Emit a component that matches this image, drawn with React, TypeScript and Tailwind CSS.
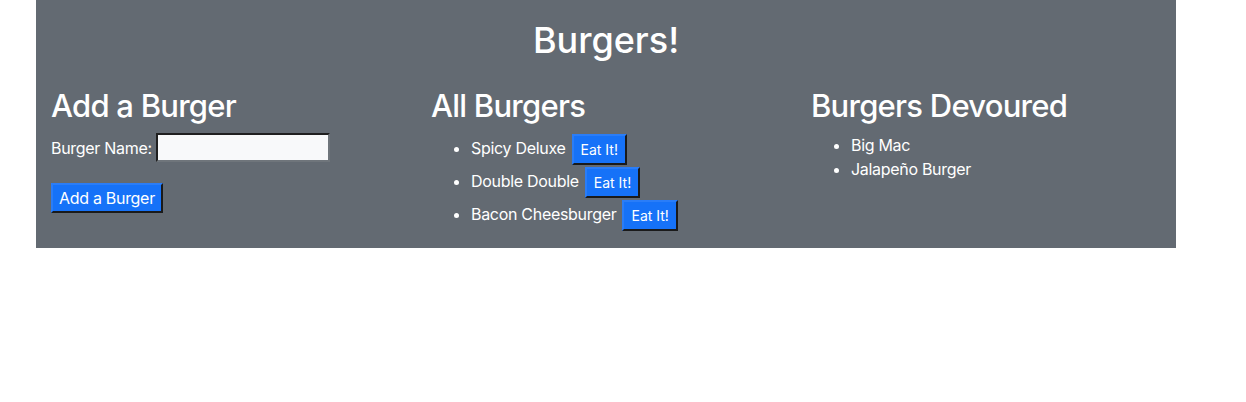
const items = ["Spicy Deluxe", "Double Double", "Bacon Cheesburger"];
const devoured = ["Big Mac", "Jalapeño Burger"];

export default function App() {
  return (
    <div className="min-h-screen bg-white font-['Inter',_'Liberation_Sans',_sans-serif]">
      <div className="ml-[36px] w-[1140px] bg-[#636a72] px-[15px] pt-[16px] text-white">
        <h1 className="text-center text-[36px] font-medium leading-[48px]">Burgers!</h1>

        <div className="mx-[-15px] mt-[23px] grid grid-cols-3 text-base leading-6 tracking-[-0.3px]">
          {/* add form */}
          <div className="px-[15px]">
            <h2 className="mb-2 text-[31px] font-medium leading-[38.4px] tracking-[-0.75px]">Add a Burger</h2>
            <div className="flex items-center gap-[4px]">
              <label>Burger Name:</label>
              <input
                type="text"
                className="h-[29px] w-[174px] border-2 border-t-[#1f1f1f] border-l-[#1f1f1f] border-r-[#6f757b] border-b-[#6f757b] bg-[#f8f9fa] px-[2px] text-black outline-none"
              />
            </div>
            <button className="mt-[21px] h-[30px] border-2 border-t-[#2a7df8] border-l-[#2a7df8] border-r-[#1a1a1a] border-b-[#1a1a1a] bg-[#1672f8] px-[6px] text-white">
              Add a Burger
            </button>
          </div>

          {/* all burgers */}
          <div className="px-[15px]">
            <h2 className="mb-2 text-[31px] font-medium leading-[38.4px] tracking-[-0.75px]">All Burgers</h2>
            <ul className="mb-4 list-disc pl-10">
              {items.map((name) => (
                <li key={name} className="py-[1px]">
                  {name}
                  <button className="ml-[6px] inline-block h-[31px] border-2 border-t-[#2a7df8] border-l-[#2a7df8] border-r-[#1a1a1a] border-b-[#1a1a1a] bg-[#1672f8] px-[7px] align-middle text-sm tracking-normal text-white">
                    Eat It!
                  </button>
                </li>
              ))}
            </ul>
          </div>

          {/* devoured */}
          <div className="px-[15px]">
            <h2 className="mb-2 text-[31px] font-medium leading-[38.4px] tracking-[-0.75px]">Burgers Devoured</h2>
            <ul className="mb-4 list-disc pl-10">
              {devoured.map((name) => (
                <li key={name}>{name}</li>
              ))}
            </ul>
          </div>
        </div>
      </div>
    </div>
  );
}
